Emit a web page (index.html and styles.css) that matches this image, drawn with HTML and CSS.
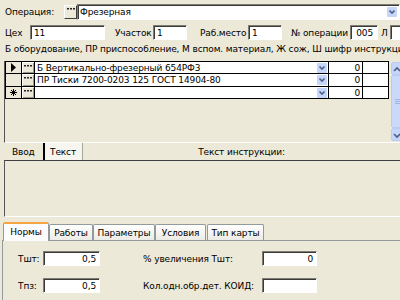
FILE: index.html
```html
<!DOCTYPE html>
<html>
<head>
<meta charset="utf-8">
<link rel="stylesheet" href="styles.css">
</head>
<body>
<div class="form">
  <div class="row1">
    <span class="lbl l-op">Операция:</span>
    <span class="ebtn"><svg width="8" height="2" viewBox="0 0 8 2"><rect x="0" y="0" width="2" height="1.5" fill="#222"/><rect x="3" y="0" width="2" height="1.5" fill="#222"/><rect x="6" y="0" width="2" height="1.5" fill="#222"/></svg></span>
    <div class="field combo"><span class="val">Фрезерная</span><span class="dd"><svg width="10" height="10" viewBox="0 0 10 10"><rect width="10" height="10" rx="1" fill="#C6D5FA"/><path d="M2.5 3.5 L5 6 L7.5 3.5" stroke="#4D6185" stroke-width="1.6" fill="none"/></svg></span></div>
  </div>

  <div class="row2">
    <span class="lbl l-ceh">Цех</span><div class="field f-ceh">11</div>
    <span class="lbl l-uch">Участок</span><div class="field f-uch">1</div>
    <span class="lbl l-rab">Раб.место</span><div class="field f-rab">1</div>
    <span class="lbl l-num">№ операции</span><div class="field f-num right">005</div>
    <span class="lbl l-l">Л</span><div class="field f-l"></div>
  </div>

  <div class="hint">Б оборудование, ПР приспособление, М вспом. материал, Ж сож, Ш шифр инструкции</div>

  <div class="gridbox">
    <div class="grid">
      <div class="c ind"><svg width="5" height="9" viewBox="0 0 5 9"><polygon points="0,0 5,4.5 0,9" fill="#000"/></svg></div>
      <div class="c eb"><svg width="8" height="2" viewBox="0 0 8 2"><rect x="0" width="2" height="1.5" fill="#222"/><rect x="3" width="2" height="1.5" fill="#222"/><rect x="6" width="2" height="1.5" fill="#222"/></svg></div>
      <div class="c txt"><span>Б Вертикально-фрезерный 654РФ3</span><svg width="10" height="10" viewBox="0 0 10 10"><rect width="10" height="10" rx="1" fill="#C6D5FA"/><path d="M2.5 3.5 L5 6 L7.5 3.5" stroke="#4D6185" stroke-width="1.6" fill="none"/></svg></div>
      <div class="c num">0</div>
      <div class="c last"></div>

      <div class="c ind r2"></div>
      <div class="c eb r2"><svg width="8" height="2" viewBox="0 0 8 2"><rect x="0" width="2" height="1.5" fill="#222"/><rect x="3" width="2" height="1.5" fill="#222"/><rect x="6" width="2" height="1.5" fill="#222"/></svg></div>
      <div class="c txt r2"><span>ПР Тиски 7200-0203 125 ГОСТ 14904-80</span><svg width="10" height="10" viewBox="0 0 10 10"><rect width="10" height="10" rx="1" fill="#C6D5FA"/><path d="M2.5 3.5 L5 6 L7.5 3.5" stroke="#4D6185" stroke-width="1.6" fill="none"/></svg></div>
      <div class="c num r2">0</div>
      <div class="c last r2"></div>

      <div class="c ind"><svg width="7" height="7" viewBox="0 0 7 7"><path d="M3.5 0 V7 M0 3.5 H7 M1 1 L6 6 M6 1 L1 6" stroke="#000" stroke-width="1"/></svg></div>
      <div class="c eb"><svg width="8" height="2" viewBox="0 0 8 2"><rect x="0" width="2" height="1.5" fill="#222"/><rect x="3" width="2" height="1.5" fill="#222"/><rect x="6" width="2" height="1.5" fill="#222"/></svg></div>
      <div class="c txt"><span></span><svg width="10" height="10" viewBox="0 0 10 10"><rect width="10" height="10" rx="1" fill="#C6D5FA"/><path d="M2.5 3.5 L5 6 L7.5 3.5" stroke="#4D6185" stroke-width="1.6" fill="none"/></svg></div>
      <div class="c num">0</div>
      <div class="c last"></div>
    </div>
    <div class="vscroll">
      <div class="sbtn"><svg width="10" height="13" viewBox="0 0 10 13"><path d="M2 8 L5 5 L8 8" stroke="#4D6185" stroke-width="1.6" fill="none"/></svg></div>
      <div class="thumb"><svg width="10" height="7" viewBox="0 0 10 7"><path d="M3 1.5 H10 M3 3.5 H10 M3 5.5 H10" stroke="#9DB4E8" stroke-width="1"/></svg></div>
      <div class="sbtn"><svg width="10" height="13" viewBox="0 0 10 13"><path d="M2 5 L5 8 L8 5" stroke="#4D6185" stroke-width="1.6" fill="none"/></svg></div>
    </div>
  </div>

  <div class="tabs1">
    <div class="t1 t1-on">Ввод</div>
    <div class="t1 t1-off">Текст</div>
    <div class="t1-title">Текст инструкции:</div>
  </div>
  <div class="textbox"></div>

  <div class="tabs2">
    <div class="t2 t2-on w1">Нормы</div>
    <div class="t2 w2">Работы</div>
    <div class="t2 w3">Параметры</div>
    <div class="t2 w4">Условия</div>
    <div class="t2 w5">Тип карты</div>
  </div>
  <div class="panel">
    <div class="prow">
      <span class="lbl p-l1">Тшт:</span><div class="field p-f1 right">0,5</div>
      <span class="lbl p-l2">% увеличения Тшт:</span><div class="field p-f2 right">0</div>
    </div>
    <div class="prow">
      <span class="lbl p-l1">Тпз:</span><div class="field p-f1 right">0,5</div>
      <span class="lbl p-l2">Кол.одн.обр.дет. КОИД:</span><div class="field p-f2 right"></div>
    </div>
  </div>
</div>
</body>
</html>
```

FILE: styles.css
```css
html, body {
  margin: 0;
  padding: 0;
  background: #ECE9D8;
}
body {
  width: 400px;
  height: 300px;
  overflow: hidden;
  font-family: "DejaVu Sans", "Liberation Sans", sans-serif;
  font-size: 9px;
  letter-spacing: -0.12px;
  color: #000;
}
.form {
  width: 420px;
}
.lbl {
  flex: none;
  white-space: nowrap;
}
.field {
  flex: none;
  box-sizing: border-box;
  background: #fff;
  border: 1px solid;
  border-color: #7F7D72 #FFFFFF #FFFFFF #7F7D72;
  box-shadow: inset 1px 1px 0 #3A3A3A;
  padding: 0 3px;
  display: flex;
  align-items: center;
  white-space: nowrap;
}
.field.right {
  justify-content: flex-end;
}

/* row 1 */
.row1 {
  display: flex;
  align-items: center;
  height: 16px;
  margin-top: 4px;
  padding-left: 5px;
  width: 395px;
}
.l-op { width: 59px; }
.ebtn {
  flex: none;
  box-sizing: border-box;
  width: 13px;
  height: 14px;
  background: #ECE9D8;
  border: 1px solid;
  border-color: #FFFFFF #404040 #404040 #FFFFFF;
  display: flex;
  justify-content: center;
  align-items: flex-start;
  padding-top: 2px;
}
.ebtn svg { display: block; }
.combo {
  flex: 1;
  height: 16px;
  padding-left: 2px;
  padding-right: 2px;
  justify-content: space-between;
  border-right-color: #fff;
}
.dd svg { display: block; }

/* row 2 */
.row2 {
  display: flex;
  align-items: center;
  height: 15px;
  margin-top: 5px;
  padding-left: 5px;
}
.row2 .field { height: 15px; }
.l-ceh { width: 25px; }
.f-ceh { width: 75px; }
.l-uch { width: 38px; margin-left: 10px; }
.f-uch { width: 34px; }
.l-rab { width: 48px; margin-left: 13px; }
.f-rab { width: 34px; }
.l-num { width: 59px; margin-left: 9px; }
.f-num { width: 28px; padding-right: 4px; }
.l-l { width: 9px; margin-left: 3px; }
.f-l { width: 20px; }

/* hint */
.hint {
  margin-top: 3px;
  padding-left: 5px;
  height: 12px;
  line-height: 12px;
  white-space: nowrap;
}

/* grid */
.gridbox {
  display: flex;
  margin-top: 6px;
  margin-left: 4px;
  height: 82px;
  box-sizing: border-box;
  border-left: 1px solid #555;
  border-bottom: 1px solid #FFFFFF;
  width: 410px;
}
.grid {
  flex: none;
  display: grid;
  grid-template-columns: 16px 13px 294px 34px 26px;
  grid-template-rows: 12px 13px 12px;
  border-left: 1px solid #000;
  border-top: 1px solid #000;
  align-self: flex-start;
}
.c {
  box-sizing: border-box;
  border-right: 1px solid #000;
  border-bottom: 1px solid #000;
  background: #fff;
  display: flex;
  align-items: center;
  white-space: nowrap;
  overflow: hidden;
}
.ind {
  background: #ECE9D8;
  justify-content: center;
}
.ind svg { display: block; }
.eb {
  background: #ECE9D8;
  box-shadow: inset 1px 1px 0 #FFFFFF, inset -1px -1px 0 #9A9888;
  justify-content: center;
  align-items: flex-start;
  padding-top: 3px;
}
.eb svg { display: block; }
.txt {
  justify-content: space-between;
  padding-left: 2px;
  padding-right: 1px;
}
.txt svg { display: block; flex: none; }
.num {
  justify-content: flex-end;
  padding-right: 2px;
}
.vscroll {
  flex: none;
  margin-left: 2px;
  margin-top: 1px;
  width: 12px;
  height: 79px;
  display: flex;
  flex-direction: column;
  background: #F3F1EC;
}
.sbtn {
  flex: none;
  height: 13px;
  box-sizing: border-box;
  background: #C6D5FA;
  border: 1px solid #B8CBF2;
  border-radius: 2px;
}
.sbtn svg { display: block; }
.thumb {
  flex: 1;
  box-sizing: border-box;
  background: #CAD8F9;
  border: 1px solid #B8CBF2;
  border-radius: 2px;
  display: flex;
  align-items: center;
}
.thumb svg { display: block; }

/* tabs 1 */
.tabs1 {
  display: flex;
  height: 17px;
  align-items: stretch;
  width: 400px;
}
.t1 {
  box-sizing: border-box;
  display: flex;
  align-items: center;
}
.t1-on {
  margin-left: 5px;
  width: 40px;
  padding-left: 7px;
  border-right: 2px solid #000;
}
.t1-off {
  width: 38px;
  padding-left: 5px;
  background: #F6F5F0;
  border-right: 1px solid #A8A697;
}
.t1-title {
  flex: 1;
  display: flex;
  align-items: center;
  justify-content: center;
  padding-left: 0;
}
.textbox {
  margin-left: 4px;
  width: 410px;
  height: 57px;
  box-sizing: border-box;
  border-top: 1px solid #404040;
  border-left: 1px solid #555;
  border-bottom: 1px solid #FFFFFF;
}

/* tabs 2 */
.tabs2 {
  display: flex;
  align-items: flex-end;
  height: 18px;
  margin-top: 5px;
  padding-left: 3px;
  position: relative;
  z-index: 1;
}
.t2 {
  box-sizing: border-box;
  height: 16px;
  display: flex;
  align-items: center;
  justify-content: center;
  border: 1px solid #919B9C;
  border-bottom: none;
  border-radius: 2px 2px 0 0;
  background: linear-gradient(#FFFFFF, #ECEBE5);
  white-space: nowrap;
}
.t2-on {
  height: 19px;
  margin-bottom: -1px;
  background: #FCFCFE;
  border-top: 2px solid #F6A542;
  padding-bottom: 1px;
}
.w1 { width: 46px; }
.w2 { width: 44px; }
.w3 { width: 62px; }
.w4 { width: 51px; }
.w5 { width: 57px; margin-left: 1px; }

.panel {
  margin-left: 2px;
  border-top: 1px solid #919B9C;
  border-left: 1px solid #919B9C;
  padding: 10px 0 0 15px;
  height: 60px;
  background: #ECE9D8;
}
.prow {
  display: flex;
  align-items: center;
  height: 15px;
  margin-bottom: 12px;
}
.prow .field { height: 15px; }
.p-l1 { width: 25px; }
.p-f1 { width: 57px; }
.p-l2 { width: 119px; margin-left: 43px; }
.p-f2 { width: 55px; }
```
